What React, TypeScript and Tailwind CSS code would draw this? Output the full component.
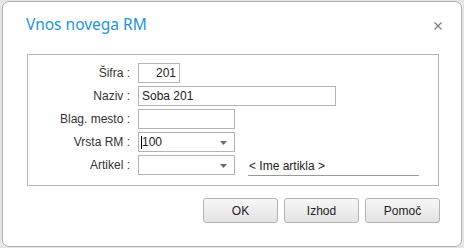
import React from "react";

const labelFont = { fontFamily: '"Liberation Sans", Arial, sans-serif' };

function Arrow() {
  return (
    <svg width="7" height="4" viewBox="0 0 7 4" className="absolute right-[7px] top-[8px]">
      <path d="M0 0 H7 L3.5 4 Z" fill="#6b6b6b" />
    </svg>
  );
}

function Row({ label, children }: { label: string; children: React.ReactNode }) {
  return (
    <div className="flex items-center h-[20px]">
      <div className="w-[102px] text-right text-[12px] text-[#333]" style={labelFont}>
        {label}
      </div>
      <div className="ml-[8px] flex items-center">{children}</div>
    </div>
  );
}

function Btn({ children }: { children: React.ReactNode }) {
  return (
    <div
      className="w-[75px] h-[25px] rounded-[3px] border border-[#b3b3b3] bg-gradient-to-b from-[#f7f7f7] to-[#e3e3e3] flex items-center justify-center text-[12px] text-[#222]"
      style={labelFont}
    >
      {children}
    </div>
  );
}

export default function App() {
  return (
    <div className="w-[464px] h-[248px] bg-[#e6e6e6] pt-[1px] pl-[2px]">
      <div className="w-[460px] h-[246px] rounded-[7px] border border-[#b0b0b0] bg-white flex flex-col">
        <div className="flex items-center justify-between h-[44px] pt-[5px] pb-[3px] pl-[23px] pr-[19px]">
          <span
            className="text-[15.5px] text-[#1e94dc]"
            style={{ fontFamily: '"Noto Sans", "Open Sans", sans-serif' }}
          >
            Vnos novega RM
          </span>
          <svg width="8" height="8" viewBox="0 0 8 8" className="mt-[2px]">
            <path d="M0.5 0.5 L7.5 7.5 M7.5 0.5 L0.5 7.5" stroke="#7a7a7a" strokeWidth="1.2" />
          </svg>
        </div>
        <div className="ml-[24px] mt-[8px] w-[412px] h-[132px] border border-[#b4b4b4] pt-[8px] flex flex-col gap-[3px]">
          <Row label="Šifra :">
            <div className="w-[42px] h-[20px] border border-[#b4b4b4] text-right pr-[3px] text-[12px] leading-[18px] text-[#222]" style={labelFont}>
              201
            </div>
          </Row>
          <Row label="Naziv :">
            <div className="w-[198px] h-[20px] border border-[#b4b4b4] pl-[3px] text-[12px] leading-[18px] text-[#222]" style={labelFont}>
              Soba 201
            </div>
          </Row>
          <Row label="Blag. mesto :">
            <div className="w-[97px] h-[20px] border border-[#b4b4b4]" />
          </Row>
          <Row label="Vrsta RM :">
            <div className="relative w-[97px] h-[20px] border border-[#b4b4b4] pl-[2px] text-[12px] leading-[18px] text-[#222] flex items-center" style={labelFont}>
              <span className="inline-block w-[1px] h-[13px] bg-black" />
              100
              <Arrow />
            </div>
          </Row>
          <Row label="Artikel :">
            <div className="relative w-[97px] h-[20px] border border-[#b4b4b4]">
              <Arrow />
            </div>
            <div className="ml-[13px] w-[171px] h-[21px] border-b border-[#9a9a9a] text-[12px] leading-[14px] pt-[4px] text-[#222] pl-[1px]" style={labelFont}>
              &lt; Ime artikla &gt;
            </div>
          </Row>
        </div>
        <div className="flex justify-end gap-[6px] mt-[12px] pr-[21px]">
          <Btn>OK</Btn>
          <Btn>Izhod</Btn>
          <Btn>Pomoč</Btn>
        </div>
      </div>
    </div>
  );
}
